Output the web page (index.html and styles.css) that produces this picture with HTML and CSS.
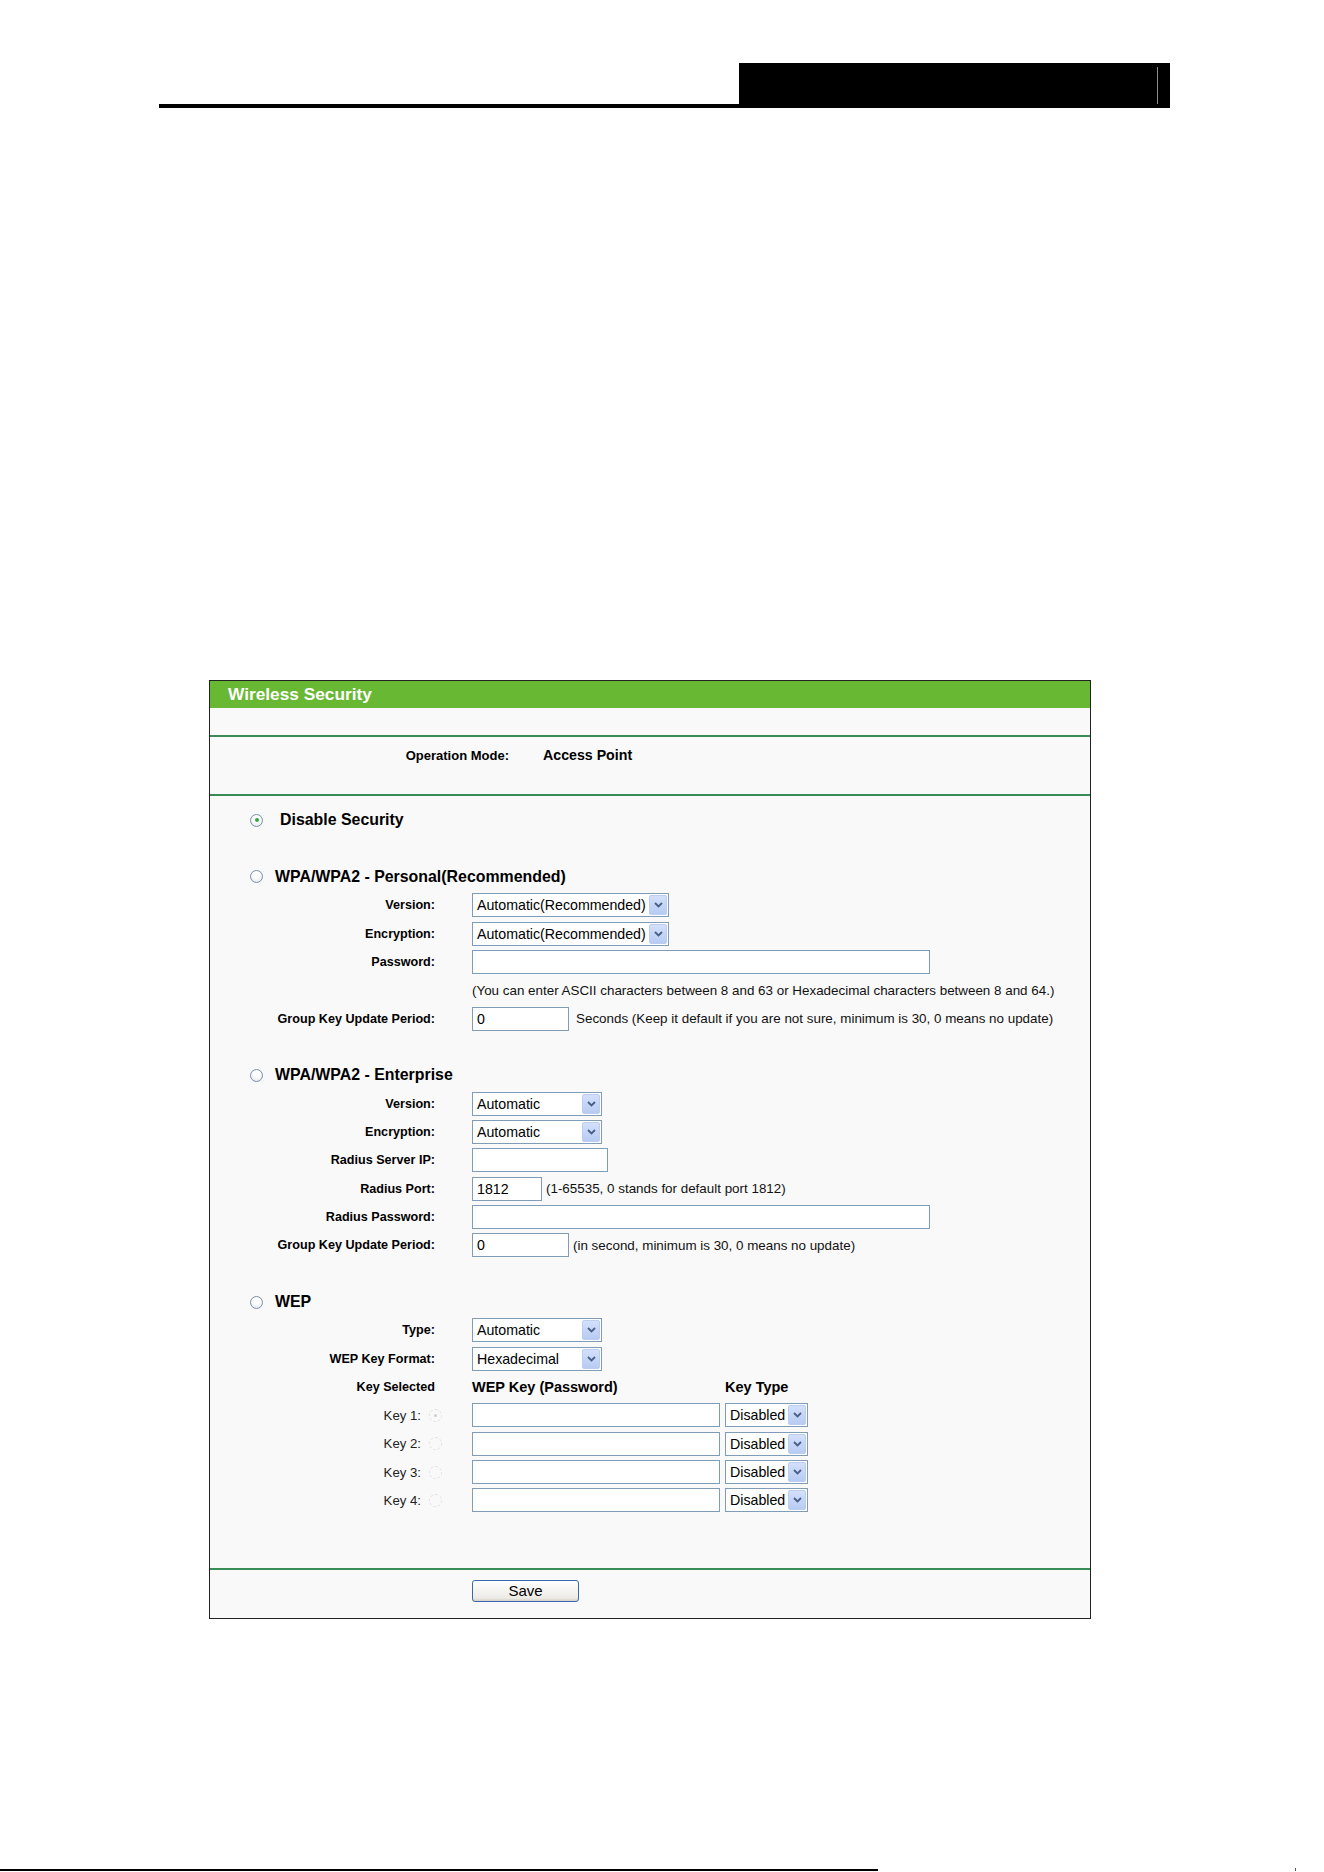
FILE: index.html
```html
<!DOCTYPE html>
<html>
<head>
  <title>Wireless Security</title>
  <link rel="stylesheet" href="styles.css">
</head>
<body>
  <div class="page-head">
    <div class="head-fill"></div>
    <div class="head-bar"><span class="head-mark"></span></div>
  </div>

  <div class="panel">
    <div class="panel-title">Wireless Security</div>
    <div class="panel-blank"></div>

    <div class="op-mode">
      <span class="op-label">Operation Mode:</span>
      <span class="op-value">Access Point</span>
    </div>

    <div class="form">
      <!-- no security -->
      <div class="option option-first">
        <span class="radio checked"></span>
        <span class="option-name">Disable Security</span>
      </div>
      <div class="gap"></div>

      <!-- WPA personal -->
      <div class="option">
        <span class="radio"></span>
        <span class="option-name">WPA/WPA2 - Personal(Recommended)</span>
      </div>
      <div class="row">
        <label>Version:</label>
        <div class="cell">
          <div class="select w197"><span class="value">Automatic(Recommended)</span><span class="arrow"><svg width="9" height="6" viewBox="0 0 9 6"><path d="M1 1l3.5 3.5L8 1" fill="none" stroke="#4a5f86" stroke-width="1.8"/></svg></span></div>
        </div>
      </div>
      <div class="row">
        <label>Encryption:</label>
        <div class="cell">
          <div class="select w197"><span class="value">Automatic(Recommended)</span><span class="arrow"><svg width="9" height="6" viewBox="0 0 9 6"><path d="M1 1l3.5 3.5L8 1" fill="none" stroke="#4a5f86" stroke-width="1.8"/></svg></span></div>
        </div>
      </div>
      <div class="row">
        <label>Password:</label>
        <div class="cell"><input class="text w458" type="text"></div>
      </div>
      <div class="row">
        <label></label>
        <div class="cell"><span class="hint">(You can enter ASCII characters between 8 and 63 or Hexadecimal characters between 8 and 64.)</span></div>
      </div>
      <div class="row">
        <label>Group Key Update Period:</label>
        <div class="cell"><input class="text w97" type="text" value="0"><span class="hint after-wide">Seconds (Keep it default if you are not sure, minimum is 30, 0 means no update)</span></div>
      </div>
      <div class="gap"></div>

      <!-- WPA enterprise -->
      <div class="option">
        <span class="radio"></span>
        <span class="option-name">WPA/WPA2 - Enterprise</span>
      </div>
      <div class="row">
        <label>Version:</label>
        <div class="cell">
          <div class="select w130"><span class="value">Automatic</span><span class="arrow"><svg width="9" height="6" viewBox="0 0 9 6"><path d="M1 1l3.5 3.5L8 1" fill="none" stroke="#4a5f86" stroke-width="1.8"/></svg></span></div>
        </div>
      </div>
      <div class="row">
        <label>Encryption:</label>
        <div class="cell">
          <div class="select w130"><span class="value">Automatic</span><span class="arrow"><svg width="9" height="6" viewBox="0 0 9 6"><path d="M1 1l3.5 3.5L8 1" fill="none" stroke="#4a5f86" stroke-width="1.8"/></svg></span></div>
        </div>
      </div>
      <div class="row">
        <label>Radius Server IP:</label>
        <div class="cell"><input class="text w136" type="text"></div>
      </div>
      <div class="row">
        <label>Radius Port:</label>
        <div class="cell"><input class="text w70" type="text" value="1812"><span class="hint after">(1-65535, 0 stands for default port 1812)</span></div>
      </div>
      <div class="row">
        <label>Radius Password:</label>
        <div class="cell"><input class="text w458" type="text"></div>
      </div>
      <div class="row">
        <label>Group Key Update Period:</label>
        <div class="cell"><input class="text w97" type="text" value="0"><span class="hint after">(in second, minimum is 30, 0 means no update)</span></div>
      </div>
      <div class="gap"></div>

      <!-- WEP -->
      <div class="option">
        <span class="radio"></span>
        <span class="option-name">WEP</span>
      </div>
      <div class="row">
        <label>Type:</label>
        <div class="cell">
          <div class="select w130"><span class="value">Automatic</span><span class="arrow"><svg width="9" height="6" viewBox="0 0 9 6"><path d="M1 1l3.5 3.5L8 1" fill="none" stroke="#4a5f86" stroke-width="1.8"/></svg></span></div>
        </div>
      </div>
      <div class="row">
        <label>WEP Key Format:</label>
        <div class="cell">
          <div class="select w130"><span class="value">Hexadecimal</span><span class="arrow"><svg width="9" height="6" viewBox="0 0 9 6"><path d="M1 1l3.5 3.5L8 1" fill="none" stroke="#4a5f86" stroke-width="1.8"/></svg></span></div>
        </div>
      </div>
      <div class="row">
        <label>Key Selected</label>
        <div class="cell">
          <span class="col-head w248">WEP Key (Password)</span>
          <span class="col-head">Key Type</span>
        </div>
      </div>
      <div class="row">
        <label class="key-label">Key 1:<span class="radio faint on"></span></label>
        <div class="cell">
          <input class="text w248" type="text">
          <div class="select w83"><span class="value">Disabled</span><span class="arrow"><svg width="9" height="6" viewBox="0 0 9 6"><path d="M1 1l3.5 3.5L8 1" fill="none" stroke="#4a5f86" stroke-width="1.8"/></svg></span></div>
        </div>
      </div>
      <div class="row">
        <label class="key-label">Key 2:<span class="radio faint"></span></label>
        <div class="cell">
          <input class="text w248" type="text">
          <div class="select w83"><span class="value">Disabled</span><span class="arrow"><svg width="9" height="6" viewBox="0 0 9 6"><path d="M1 1l3.5 3.5L8 1" fill="none" stroke="#4a5f86" stroke-width="1.8"/></svg></span></div>
        </div>
      </div>
      <div class="row">
        <label class="key-label">Key 3:<span class="radio faint"></span></label>
        <div class="cell">
          <input class="text w248" type="text">
          <div class="select w83"><span class="value">Disabled</span><span class="arrow"><svg width="9" height="6" viewBox="0 0 9 6"><path d="M1 1l3.5 3.5L8 1" fill="none" stroke="#4a5f86" stroke-width="1.8"/></svg></span></div>
        </div>
      </div>
      <div class="row">
        <label class="key-label">Key 4:<span class="radio faint"></span></label>
        <div class="cell">
          <input class="text w248" type="text">
          <div class="select w83"><span class="value">Disabled</span><span class="arrow"><svg width="9" height="6" viewBox="0 0 9 6"><path d="M1 1l3.5 3.5L8 1" fill="none" stroke="#4a5f86" stroke-width="1.8"/></svg></span></div>
        </div>
      </div>
    </div>

    <div class="panel-foot">
      <button type="button" class="save">Save</button>
    </div>
  </div>

  <div class="page-foot">
    <div class="foot-line"></div>
    <span class="foot-tick"></span>
  </div>
</body>
</html>
```

FILE: styles.css
```css
/* page frame */
body {
  margin: 0;
  background: #fff;
  font-family: "Liberation Sans", Arial, sans-serif;
  color: #000;
}

.page-head {
  display: flex;
  margin: 63px 0 0 159px;
  width: 1011px;
  border-bottom: 4px solid #000;
}

.head-fill {
  flex: 1;
}

.head-bar {
  width: 431px;
  height: 41px;
  background: #000;
  display: flex;
  justify-content: flex-end;
}

.head-mark {
  width: 1px;
  margin: 4px 12px 0 0;
  background: #8a8a8a;
}

/* settings panel */
.panel {
  margin: 572px 0 0 209px;
  width: 880px;
  border: 1px solid #222;
  background: #f9f9f9;
}

.panel-title {
  height: 27px;
  line-height: 26px;
  padding-left: 18px;
  background: #68b834;
  color: #fff;
  font-size: 17.3px;
  font-weight: bold;
}

.panel-blank {
  height: 27px;
  border-bottom: 2px solid #3a8c57;
}

.op-mode {
  display: flex;
  align-items: center;
  height: 28px;
  padding-top: 4px;
  padding-bottom: 25px;
  border-bottom: 2px solid #3a8c57;
}

.op-label {
  width: 299px;
  text-align: right;
  font-size: 13px;
  font-weight: bold;
}

.op-value {
  margin-left: 34px;
  font-size: 14.2px;
  font-weight: bold;
}

.form {
  padding: 10px 0 53px;
  border-bottom: 2px solid #3a8c57;
}

.gap {
  height: 28.35px;
}

.option {
  display: flex;
  align-items: center;
  height: 28.35px;
  padding-left: 40px;
}

.option-name {
  margin-left: 12px;
  font-size: 15.9px;
  font-weight: bold;
}

.option-first .option-name {
  margin-left: 17px;
}

.row {
  display: grid;
  grid-template-columns: 225px 1fr;
  column-gap: 37px;
  align-items: center;
  height: 28.35px;
}

.row label {
  text-align: right;
  font-size: 12.6px;
  font-weight: bold;
}

.row label.key-label {
  display: flex;
  justify-content: flex-end;
  align-items: center;
  font-weight: normal;
  font-size: 13.2px;
  color: #222;
}

.cell {
  display: flex;
  align-items: center;
}

/* radio buttons */
.radio {
  display: inline-block;
  box-sizing: border-box;
  width: 13px;
  height: 13px;
  border-radius: 50%;
  border: 1px solid #7d8fa6;
  background: radial-gradient(circle at 50% 35%, #fff 30%, #dde3ea 100%);
  position: relative;
}

.radio.checked::after {
  content: "";
  position: absolute;
  left: 3.5px;
  top: 3.5px;
  width: 4px;
  height: 4px;
  border-radius: 50%;
  background: #2fa83a;
}

.radio.faint {
  border: 1px dashed #e2e2e2;
  background: none;
  margin-left: 8px;
  margin-right: -7px;
}

.radio.faint.on::after {
  content: "";
  position: absolute;
  left: 4px;
  top: 4px;
  width: 3px;
  height: 3px;
  border-radius: 50%;
  background: #cfcfcf;
}

/* inputs and drop-downs */
.text {
  box-sizing: border-box;
  height: 24px;
  border: 1px solid #7f9db9;
  background: #fff;
  padding: 0 4px;
  font-family: "Liberation Sans", Arial, sans-serif;
  font-size: 14.2px;
  color: #000;
  margin: 0;
}

.select {
  display: flex;
  box-sizing: border-box;
  height: 24px;
  border: 1px solid #7f9db9;
  background: #fff;
}

.select .value {
  flex: 1;
  padding-left: 4px;
  line-height: 22px;
  font-size: 14.2px;
  white-space: nowrap;
  overflow: hidden;
}

.select .arrow {
  display: flex;
  align-items: center;
  justify-content: center;
  width: 16px;
  margin: 1px;
  border: 1px solid #bccdf1;
  border-radius: 2px;
  background: linear-gradient(#d3e0fb, #b7cbf2);
}

.w70 { width: 70px; }
.w83 { width: 83px; }
.w97 { width: 97px; }
.w130 { width: 130px; }
.w136 { width: 136px; }
.w197 { width: 197px; }
.w248 { width: 248px; }
.w458 { width: 458px; }

.select.w83 {
  margin-left: 5px;
}

.hint {
  font-size: 13.4px;
  color: #111;
  white-space: nowrap;
}

.hint.after {
  margin-left: 4px;
}

.hint.after-wide {
  margin-left: 7px;
}

.col-head {
  display: inline-block;
  font-size: 14.5px;
  font-weight: bold;
}

.col-head.w248 {
  margin-right: 5px;
}

/* footer of the panel */
.panel-foot {
  height: 48px;
  padding-left: 262px;
}

.save {
  margin-top: 10px;
  width: 107px;
  height: 22px;
  border: 1px solid #3868b0;
  border-radius: 3px;
  background: linear-gradient(#ffffff, #ecebe6 85%, #d6d0c5);
  font-family: "Liberation Sans", Arial, sans-serif;
  font-size: 15px;
  color: #000;
  padding: 0;
}

/* page bottom rule */
.page-foot {
  display: flex;
  align-items: flex-end;
  margin-top: 249px;
  height: 3px;
}

.foot-line {
  width: 878px;
  height: 2px;
  background: #000;
}

.foot-tick {
  width: 1px;
  height: 3px;
  margin-left: 417px;
  background: #555;
}
```
